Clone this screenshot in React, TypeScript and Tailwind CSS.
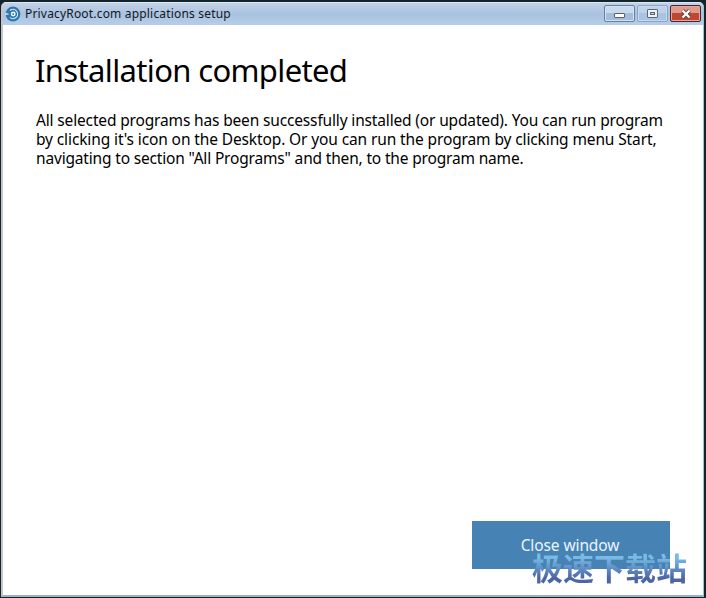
const bodyFont = "font-['Noto_Sans','DejaVu_Sans',sans-serif]";

function LogoIcon() {
  return (
    <svg width="16" height="16" viewBox="0 0 16 16" className="shrink-0">
      <circle cx="8" cy="8" r="7.4" fill="#2f78ae" />
      <path d="M4.9 4.600a4.600 4.600 0 1 1 0 6.800" fill="none" stroke="#cfe6f5" strokeWidth="1.2" />
      <circle cx="8.2" cy="8" r="1.7" fill="none" stroke="#f2fafe" strokeWidth="1.5" />
      <path d="M0 8h3.500" stroke="#cfe6f5" strokeWidth="1.3" />
    </svg>
  );
}

function TitleBar() {
  return (
    <header className="flex h-[22px] shrink-0 items-start bg-linear-to-b from-[#c3d2e6] via-[#a9c2e0] to-[#b7cee9] pl-[2px] pr-[2px]">
      <div className="mt-[3px] flex h-4 items-center">
        <LogoIcon />
        <span className="ml-[4px] whitespace-nowrap font-['Noto_Sans','DejaVu_Sans',sans-serif] text-[12px] leading-4 tracking-[0.18px] text-[#111820]">
          PrivacyRoot.com applications setup
        </span>
      </div>
      <div className="ml-auto mt-[2px] flex gap-[2px]">
        <button className="flex h-[17px] w-[31px] items-center justify-center rounded-[2px] border border-[#66809f] bg-linear-to-b from-[#c9daed] from-50% to-[#a3bedb] to-50% shadow-[inset_0_0_0_1px_#d4e2f1]">
          <svg width="11" height="5" viewBox="0 0 11 5" className="mt-[4px]">
            <rect x=".5" y=".5" width="10" height="4" rx=".5" fill="#fff" stroke="#57606c" />
          </svg>
        </button>
        <button className="flex h-[17px] w-[31px] items-center justify-center rounded-[2px] border border-[#8ca6c6] bg-linear-to-b from-[#bdd2ea] from-50% to-[#a9c4e2] to-50% shadow-[inset_0_0_0_1px_#c6d8ec]">
          <svg width="11" height="9" viewBox="0 0 11 9">
            <rect x=".5" y=".5" width="10" height="8" rx=".5" fill="#edf2f7" stroke="#5d6875" />
            <rect x="3.5" y="3.5" width="4" height="2" fill="#b8cde5" stroke="#5d6875" />
          </svg>
        </button>
        <button className="flex h-[17px] w-[31px] items-center justify-center rounded-[2px] border border-[#53202b] bg-linear-to-b from-[#df9a8c] from-50% to-[#c04632] to-50% shadow-[inset_0_0_0_1px_#e3a99c]">
          <svg width="12" height="10" viewBox="0 0 12 10">
            <path d="M2.5 1.5l7 7M9.5 1.5l-7 7" stroke="#58434b" strokeWidth="4" />
            <path d="M2.5 1.5l7 7M9.5 1.5l-7 7" stroke="#fff" strokeWidth="2.3" />
          </svg>
        </button>
      </div>
    </header>
  );
}

export default function App() {
  return (
    <div className="flex h-[598px] w-[706px] flex-col overflow-hidden bg-[#12252d] pb-px pl-px pr-[2px] pt-[2px]">
      <div className="flex flex-1 flex-col overflow-hidden rounded-t-[5px] border-b-2 border-l-2 border-r border-t border-b-[#8fb8c4] border-l-[#c6c6ca] border-r-[#8ccbd0] border-t-[#dde7f2] bg-white">
        <TitleBar />
        <main className={`${bodyFont} relative flex flex-1 flex-col pl-[32px] pr-[33px] text-black`}>
          <h1 className="mt-[23px] whitespace-nowrap text-[31px] leading-[44px] tracking-[-0.65px]">Installation completed</h1>
          <div className="mt-[19px] flex flex-col whitespace-nowrap pl-px text-[15.5px] leading-[19px]">
            <p className="tracking-[-0.155px]">All selected programs has been successfully installed (or updated). You can run program</p>
            <p className="tracking-[-0.12px]">by clicking it's icon on the Desktop. Or you can run the program by clicking menu Start,</p>
            <p className="tracking-[-0.17px]">navigating to section "All Programs" and then, to the program name.</p>
          </div>
          <button className="mb-[26px] ml-auto mt-auto flex h-[48px] w-[198px] items-center justify-center bg-[#4682b4] pr-[2px] pt-[2px] text-[15.5px] tracking-[-0.1px] text-[#eaf6ff]">
            Close window
          </button>
          <div className="absolute bottom-[5px] right-[16px] whitespace-nowrap bg-linear-to-b from-[#78bce6] from-30% to-[#4c65a5] to-75% bg-clip-text font-['Noto_Sans_CJK_SC',sans-serif] text-[31px] font-bold leading-[46px] text-transparent">
            极速下载站
          </div>
        </main>
      </div>
    </div>
  );
}
